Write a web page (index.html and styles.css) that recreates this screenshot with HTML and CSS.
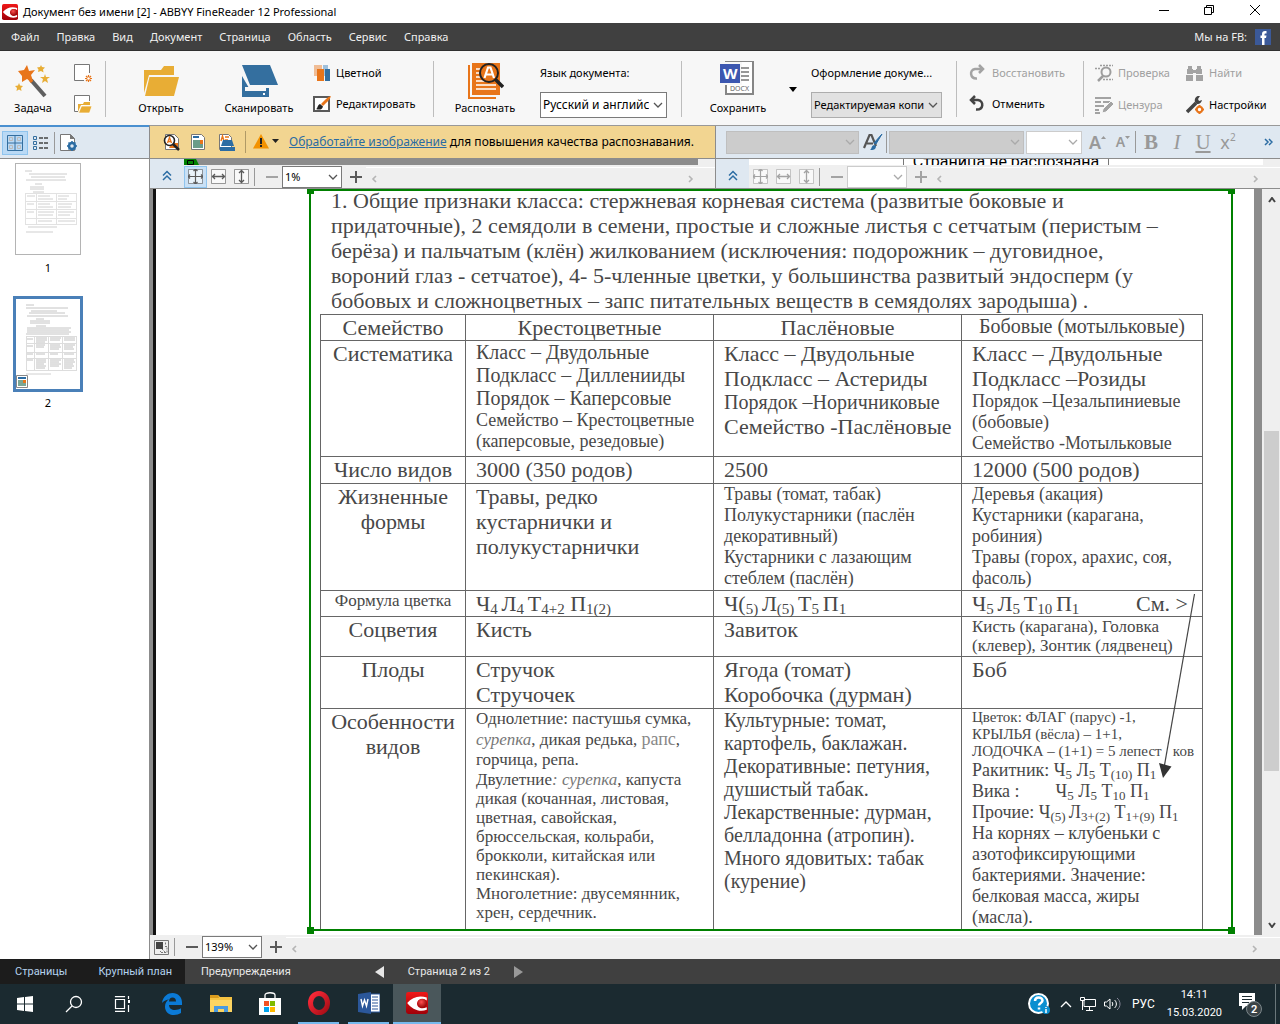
FILE: index.html
```
<!DOCTYPE html>
<html lang="ru">
<head>
<meta charset="utf-8">
<title>Документ без имени [2] - ABBYY FineReader 12 Professional</title>
<link rel="stylesheet" href="styles.css">
</head>
<body>
<svg class="defs" width="0" height="0" aria-hidden="true">
  <defs>
    <linearGradient id="red" x1="0" y1="0" x2="0" y2="1"><stop offset="0" stop-color="#f01818"/><stop offset="1" stop-color="#a00008"/></linearGradient>
    <linearGradient id="ring" x1="0" y1="0" x2="1" y2="1"><stop offset="0" stop-color="#ff2b3a"/><stop offset="1" stop-color="#a60d16"/></linearGradient>
    <radialGradient id="ball" cx=".4" cy=".35" r=".7"><stop offset="0" stop-color="#ff5050"/><stop offset="1" stop-color="#8c0000"/></radialGradient>
    <symbol id="abbyy" viewBox="0 0 18 18"><rect width="18" height="18" rx="2" fill="url(#red)"/><path d="M1 9C5 4 11 2.500 17 4.500v2.500C13 4.500 9 6 9 9.500c0 3.500 4 5 8 3v2C11 17 5 14 1 9z" fill="#fff"/><circle cx="13.300" cy="9.300" r="3.700" fill="url(#ball)"/></symbol>
    <symbol id="down" viewBox="0 0 10 6"><path d="M1 1l4 4 4-4" fill="none" stroke="currentColor" stroke-width="1.300"/></symbol>
    <symbol id="left" viewBox="0 0 6 8"><path d="M5 1L2 4l3 3" fill="none" stroke="currentColor" stroke-width="1.600"/></symbol>
    <symbol id="right" viewBox="0 0 6 8"><path d="M1 1l3 3-3 3" fill="none" stroke="currentColor" stroke-width="1.600"/></symbol>
    <symbol id="ups" viewBox="0 0 10 10"><path d="M1 5l4-4 4 4M1 9.500l4-4 4 4" fill="none" stroke="#2b6ca3" stroke-width="1.500"/></symbol>
    <symbol id="fitall" viewBox="0 0 15 15"><path d="M.5.5h14v14H.5z" fill="#fff" fill-opacity=".6" stroke="currentColor" stroke-opacity=".6"/><path d="M0 7.500h15M7.500 0v15M2 5.500l-2 2 2 2M13 5.500l2 2-2 2M5.500 2l2-2 2 2M5.500 13l2 2 2-2" fill="none" stroke="currentColor" stroke-width="1.200"/></symbol>
    <symbol id="fitw" viewBox="0 0 15 15"><path d="M.5.5h14v14H.5z" fill="#fff" fill-opacity=".6" stroke="currentColor" stroke-opacity=".6"/><path d="M1 7.500h13M4 5L1.500 7.500 4 10M11 5l2.500 2.500L11 10" fill="none" stroke="currentColor" stroke-width="1.300"/></symbol>
    <symbol id="fith" viewBox="0 0 15 15"><path d="M.5.5h14v14H.5z" fill="#fff" fill-opacity=".6" stroke="currentColor" stroke-opacity=".6"/><path d="M7.500 1v13M5 4l2.500-2.500L10 4M5 11l2.500 2.500L10 11" fill="none" stroke="currentColor" stroke-width="1.300"/></symbol>
    <symbol id="minus" viewBox="0 0 12 12"><path d="M0 5h12v2H0z" fill="currentColor"/></symbol>
    <symbol id="plus" viewBox="0 0 12 12"><path d="M0 5h5V0h2v5h5v2H7v5H5V7H0z" fill="currentColor"/></symbol>
  </defs>
</svg>

<header class="title">
  <svg width="16" height="16"><use href="#abbyy"/></svg>
  <h1>Документ без имени [2] - ABBYY FineReader 12 Professional</h1>
  <div class="winbtns">
    <button aria-label="Свернуть"><svg width="10" height="10"><path d="M0 5.500h10" stroke="#000"/></svg></button>
    <button aria-label="Восстановить окно"><svg width="10" height="10" fill="none" stroke="#000"><path d="M.5 2.500h7v7h-7zM2.500 2.500v-2h7v7h-2"/></svg></button>
    <button aria-label="Закрыть"><svg width="10" height="10"><path d="M0 0l10 10M10 0L0 10" stroke="#000"/></svg></button>
  </div>
</header>

<nav class="menu">
  <button>Файл</button><button>Правка</button><button>Вид</button><button>Документ</button><button>Страница</button><button>Область</button><button>Сервис</button><button>Справка</button>
  <a href="#fb" class="fb"><span>Мы на FB:</span>
    <svg width="16" height="16"><path d="M0 0h16v16H0z" fill="#3b5998"/><path d="M7 16V9H5.500V6.500H7V5c0-2 1-3 3-3h1.500v2.500h-1c-.7 0-1 .3-1 1v1h2L11 9H9.500v7z" fill="#fff"/></svg></a>
</nav>

<div class="tools">
  <section class="g g1">
    <button class="big"><svg width="38" height="38" viewBox="0 0 38 38"><path d="M17 19L31 35" stroke="#5f5f5f" stroke-width="4"/><path d="M13 15l5 6" stroke="#e8751a" stroke-width="3"/><path d="M13 4l2 6 6-1-4 5 2 6-6-2-5 3v-6L4 10l6-1z" fill="#e8751a"/><path d="M27 4l1 2 3 .5-2 2 .5 3-2.500-1.500L24 11l.5-2.500L23 6.500l3-.5zM31 13l1 3h4l-3 2 1 4-3-2-3 2 1-4-3-2h4zM5 22l1 2.500 3 .5-2 2 .5 3L5 28.500 2.500 30l.5-3-2-2 3-.5z" fill="#e8ad35"/></svg>Задача</button>
    <div class="rows">
      <button aria-label="Новый документ"><svg width="18" height="19" viewBox="0 0 18 19"><path d="M15.500 9V.5H.5v16H10" fill="#fff" stroke="#777"/><path d="M14.500 11v7M11 14.500h7M12 12l5 5M17 12l-5 5" stroke="#e8751a" stroke-width="1.200"/><circle cx="14.500" cy="14.500" r="1.300" fill="#fff"/></svg></button>
      <button aria-label="Открыть документ"><svg width="18" height="19" viewBox="0 0 18 19"><path d="M15.500 6V.5H.5v16H4" fill="#fff" stroke="#777"/><path d="M4 17V9h5l1-2h6v3H7z" fill="#e8ad35"/><path d="M7.500 11H18l-2.500 7H4.500z" fill="#e8ad35" stroke="#fff" stroke-width=".7"/></svg></button>
    </div>
  </section>
  <section class="g g2">
    <button class="big"><svg width="38" height="38" viewBox="0 0 38 38"><path d="M2 32V9h17l3-4h10v9H7z" fill="#e8ad35"/><path d="M7.500 16H37l-5 19H3z" fill="#e8ad35"/></svg>Открыть</button>
    <button class="big wide"><svg width="38" height="38" viewBox="0 0 38 38"><path d="M2 4h28l8 20H10z" fill="#346f9f"/><path d="M2 15l7 12h20v9H2z" fill="#346f9f"/><path d="M5 26h21v4H5z" fill="#f7f7f7"/><path d="M23 32h2v2h-2z" fill="#fff"/></svg>Сканировать</button>
    <div class="rows">
      <button class="lbl"><svg width="18" height="18"><path d="M1 1h8v11H1z" fill="#f0bd96"/><path d="M10 1h5v11h-5z" fill="#9fc0dc"/><path d="M4 5h7v12H4z" fill="#e8751a"/><path d="M12 5h5v12h-5z" fill="#346f9f"/></svg>Цветной</button>
      <button class="lbl"><svg width="18" height="18"><path d="M1 2h15v14H1z" fill="#fff" stroke="#5a5a5a" stroke-width="2"/><path d="M8 9c4-4 6-7 10-8-1 4-4 6-8 10z" fill="#e8751a"/><path d="M3 14c2-.5 1-4 4-5l3 2.500C9 15 6 15 3 14z" fill="#222"/></svg>Редактировать</button>
    </div>
  </section>
  <section class="g g3">
    <button class="big"><svg width="38" height="38" viewBox="0 0 38 38"><path d="M2 4h2v32h26v2H2z" fill="#e8751a"/><path d="M6 2h28v32H6z" fill="#e8751a"/><path d="M10 8h10M10 12h10M10 16h10M10 20h12M10 24h20M10 28h20" stroke="#fff" stroke-width="1.500"/><path d="M29 18l8 8" stroke="#222" stroke-width="3.500"/><circle cx="23" cy="12" r="9" fill="#e8751a" stroke="#222" stroke-width="2"/><path d="M18.500 17L22 6.500h2.500L28 17M20 13.500h6.500" fill="none" stroke="#fff" stroke-width="2.200"/></svg>Распознать</button>
    <div class="rows">
      <label for="lang">Язык документа:</label>
      <span class="pick w127"><select id="lang"><option>Русский и английский</option></select><svg width="10" height="6"><use href="#down"/></svg></span>
    </div>
  </section>
  <section class="g g4">
    <button class="big"><svg width="38" height="38" viewBox="0 0 38 38"><path d="M7 0h27v33H7z" fill="#fff" stroke="#868686" stroke-width="2"/><path d="M0 2h22v21H0z" fill="#3c57b0" stroke="#f7f7f7" stroke-width="2"/><path d="M22 7h8M22 11h8M22 15h8M22 19h8" stroke="#777" stroke-width="1.500"/><text x="4" y="18" font-size="15" font-weight="700" fill="#fff">W</text><text x="11" y="30" font-size="7" fill="#666">DOCX</text></svg>Сохранить</button>
    <button class="arrow" aria-label="Варианты сохранения"><svg width="8" height="5"><path d="M0 0h8L4 5z"/></svg></button>
    <div class="rows">
      <label for="style">Оформление докуме...</label>
      <span class="pick w131 grey"><select id="style"><option>Редактируемая копия</option></select><svg width="10" height="6"><use href="#down"/></svg></span>
    </div>
  </section>
  <section class="g g5">
    <div class="rows">
      <button class="lbl" disabled><svg width="18" height="18" fill="none" stroke="#a3a3a3" stroke-width="2.500"><path d="M10 1l4 4-4 4M14 5H6c-6 1-5 10 2 9.500"/></svg>Восстановить</button>
      <button class="lbl"><svg width="18" height="18" fill="none" stroke="#444" stroke-width="2.500"><path d="M6 1L2 5l4 4M2 5h7c6 1 6 10-2 9.500"/></svg>Отменить</button>
    </div>
  </section>
  <section class="g g6">
    <button class="lbl" disabled><svg width="18" height="18" fill="none" stroke="#9d9d9d"><circle cx="11" cy="8" r="4.500" stroke-width="2"/><path d="M8 12l-5 5" stroke-width="2.500"/><path d="M5 1.500h13M0 4.500h6M8 15.500h10" stroke-dasharray="2 1" stroke-width="1.500"/></svg>Проверка</button>
    <button class="lbl" disabled><svg width="18" height="18" fill="#a3a3a3"><path d="M2 2h4v3H2zM11 2h4v3h-4zM1 5h6v5H1zM10 5h6v5h-6zM7 6h3v3H7zM0 11h7v6H0zM10 11h7v6h-7z"/></svg>Найти</button>
    <button class="lbl" disabled><svg width="18" height="18"><path d="M0 2h16M0 6h6M8 6h8M0 10h9M0 14h4M0 17h5" stroke="#a3a3a3" stroke-width="2"/><path d="M7 17l1-4 8-8 3 3-8 8z" fill="#a3a3a3" stroke="#f7f7f7"/></svg>Цензура</button>
    <button class="lbl"><svg width="18" height="18"><path d="M1 16L10 7" stroke="#444" stroke-width="3.500"/><path d="M14 0c-4-1-6 3-5 6 1 3 6 3 7-2l-3 1-1-2z" fill="#444"/><circle cx="13.500" cy="13.500" r="2.700" fill="#fff" stroke="#e8751a" stroke-width="2"/><path d="M13.500 9v2M13.500 16v2M9 13.500h2M16 13.500h2" stroke="#e8751a" stroke-width="2"/></svg>Настройки</button>
  </section>
</div>

<main>
  <aside>
    <div class="viewbar">
      <button class="sel" aria-label="Эскизы"><svg width="16" height="16" fill="none" stroke="#346f9f"><path d="M.5.500h15v15H.5zM8 0v16M0 8h16"/><path d="M2.500 2.500h3v3h-3zM10.500 2.500h3v3h-3zM2.500 10.500h3v3h-3zM10.500 10.500h3v3h-3z" stroke="#bbb"/></svg></button>
      <button aria-label="Список"><svg width="16" height="14" fill="none"><path d="M.5.5h3v3h-3zM.5 5.500h3v3h-3zM.5 10.500h3v3h-3z" stroke="#346f9f"/><path d="M6 2h10M6 7h10M6 12h10" stroke="#444" stroke-width="1.500" stroke-dasharray="4 1"/></svg></button>
      <i class="sep"></i>
      <button aria-label="Свойства страницы"><svg width="18" height="18" viewBox="0 0 18 18"><path d="M.5.5h10l4 4v12H.5z" fill="#fff" stroke="#777"/><path d="M10 0v5h5z" fill="#777"/><circle cx="12" cy="12" r="3" fill="#dfe8f1" stroke="#2b6ca3" stroke-width="2.500"/><path d="M12 7v2M12 15v2M7 12h2M15 12h2M8.500 8.500L10 10M14 14l1.500 1.500M15.500 8.500L14 10M10 14l-1.500 1.500" stroke="#2b6ca3" stroke-width="1.500"/></svg></button>
    </div>
    <ol class="thumbs">
      <li><a href="#p1" class="thumb" aria-label="Страница 1"><svg width="64" height="90" stroke="#cfcfcf"><path d="M9 7h7M13 10h38M15 13h34M10 16h40M19 20h7M14 23h14M14 25h14M17 28h11" stroke="#ccc"/><g stroke="#d0d0d0"><path d="M9 29.500h52M9 37.500h52M9 45.500h52M9 54.500h52M9 60.500h52M9.500 29v32M20.500 29v32M40.500 29v32M60.500 29v32" stroke="#e2e2e2"/><path d="M22 32h12M22 35h15M22 40h12M22 43h15M22 48h16M22 51h15M22 57h14M42 32h11M42 35h9M42 40h14M42 43h13M42 48h16M42 51h12M42 57h17M11 32h8M11 40h7M11 48h7"/></g><path d="M12 63h29M10 68h27"/></svg></a><span>1</span></li>
      <li><a href="#p2" class="thumb on" aria-label="Страница 2"><svg width="64" height="90" stroke="#d0d0d0"><path d="M10 6h8M10 9h42M15 12h26M13 14h36M11 17h41M20 20h8M14 22h20M14 24h20M20 27h10M11 29h44M11 31h42M11 33h44M10 35h43" stroke="#c4c4c4"/><path d="M10 37.500h51M10 44.500h51M10 53.500h51M10 59.500h51M10 71.500h51M10.500 37v35M18.500 37v35M32.500 37v35M46.500 37v35M60.500 37v35" stroke="#ddd"/><path d="M20 39h11M20 41h11M20 43h9M34 39h11M34 41h10M48 39h11M48 41h11M20 46h9M20 48h8M34 46h10M34 48h11M34 50h9M48 46h11M48 48h9M48 50h10M20 55h9M34 55h8M48 55h10M20 61h10M20 63h10M20 65h8M20 67h10M20 69h9M34 61h11M34 63h9M34 65h11M34 67h9M48 61h10M48 63h11M48 65h9M48 67h10M48 69h8M11 40h6M11 47h6M11 55h6M11 61h6" stroke="#c0c0c0"/><path d="M10 75h25"/><path d="M.5 76.500h11v12H.5z" fill="#fff" stroke="#888"/><path d="M2 79h8" stroke="#2b6ca3" stroke-width="2"/><path d="M2 81h8v6H2z" fill="#7aa695" stroke="none"/><path d="M7 81h3v3H7z" fill="#e8751a" stroke="none"/></svg></a><span>2</span></li>
    </ol>
  </aside>

  <div class="work">
    <div class="bars">
      <div class="msg">
        <button aria-label="Распознать страницу"><svg width="18" height="18"><path d="M2.500 1.500h9l4 4v11h-13z" fill="#fff" stroke="#777"/><path d="M9 10h6v5H6z" fill="#e8751a"/><circle cx="6.500" cy="7.500" r="5" fill="#fff" stroke="#222" stroke-width="1.600"/><path d="M10 11l6 6" stroke="#222" stroke-width="2.500"/><path d="M4.500 10l2-5.500 2 5.500M5 8.500h3" fill="none" stroke="#e8751a" stroke-width="1.300"/></svg></button>
        <button aria-label="Анализ страницы"><svg width="18" height="18"><path d="M1.500 1.500h10l3 3v12h-13z" fill="#fff" stroke="#777"/><path d="M3 3h6v2H3z" fill="#2b6ca3"/><path d="M3 7h10v8H3z" fill="#6b9c89"/><path d="M10 7h3v4h-3z" fill="#e8751a"/></svg></button>
        <button aria-label="Сканировать страницу"><svg width="18" height="18"><path d="M2.500 1.500h9l3 3v12h-12z" fill="#fff" stroke="#777"/><path d="M4 8l1.500-5L7 8M8 4h4M8 7h3" fill="none" stroke="#e8751a" stroke-width="1.400"/><path d="M6 7h9l2 6H4zM3 14h15v4H3z" fill="#2b6ca3"/></svg></button>
        <i class="sep"></i>
        <button class="warn" aria-label="Предупреждения страницы"><svg width="27" height="16"><path d="M8 0l8 14.500H0z" fill="#f39200"/><path d="M8 4v6M8 11v2" stroke="#222" stroke-width="2"/><path d="M19 5h7l-3.500 4z" fill="#222"/></svg></button>
        <p><a href="#fix">Обработайте изображение</a> для повышения качества распознавания.</p>
      </div>
      <div class="fmt">
        <span class="pick w133 off"><select aria-label="Стиль" disabled><option></option></select><svg width="10" height="6"><use href="#down"/></svg></span>
        <button class="brush" aria-label="Редактор стилей"><svg width="20" height="18"><path d="M1 15L6.500 2h2L13 13M4 10.500h6" fill="none" stroke="#555" stroke-width="2.200"/><path d="M19 1l-6 10-2-1z" fill="#2b6ca3" stroke="#2b6ca3"/><path d="M7 17c2-1 1-4 4-5l2 1c0 4-3 4-6 4z" fill="#2b6ca3"/></svg></button>
        <i class="sep"></i>
        <span class="pick w135 off"><select aria-label="Шрифт" disabled><option></option></select><svg width="10" height="6"><use href="#down"/></svg></span>
        <span class="pick w56 pale"><select aria-label="Размер шрифта" disabled><option></option></select><svg width="10" height="6"><use href="#down"/></svg></span>
        <button class="f big-a" disabled>A<svg width="5" height="3"><path d="M0 3l2.500-3L5 3z" fill="#999"/></svg></button>
        <button class="f small-a" disabled>A<svg width="5" height="3"><path d="M0 0l2.500 3L5 0z" fill="#999"/></svg></button>
        <i class="sep"></i>
        <button class="f serif b" disabled>B</button>
        <button class="f serif i" disabled>I</button>
        <button class="f serif u" disabled>U</button>
        <button class="f x2" disabled>x<sup>2</sup></button>
        <button class="more" aria-label="Ещё"><svg width="9" height="8" fill="none" stroke="#2b6ca3" stroke-width="1.500"><path d="M1 1l3 3-3 3M5 1l3 3-3 3"/></svg></button>
      </div>
    </div>

    <div class="minis">
      <div class="mini">
        <button class="fold" aria-label="Свернуть панель"><svg width="10" height="11"><use href="#ups"/></svg></button>
        <div class="minibody">
          <div class="peek dark"><svg width="16" height="6"><path d="M0 0h12l3 6H0z" fill="#008000"/><path d="M3.500 1.500h6v4h-6z" fill="#008000" stroke="#000"/></svg></div>
          <div class="zoombar">
            <button class="sq on" aria-label="По размеру окна"><svg width="15" height="15"><use href="#fitall"/></svg></button>
            <button class="sq" aria-label="По ширине"><svg width="15" height="15"><use href="#fitw"/></svg></button>
            <button class="sq" aria-label="По высоте"><svg width="15" height="15"><use href="#fith"/></svg></button>
            <i class="sep"></i>
            <button class="z dim" aria-label="Уменьшить"><svg width="12" height="12"><use href="#minus"/></svg></button>
            <span class="pick zoom"><select aria-label="Масштаб"><option>1%</option></select><svg width="10" height="6"><use href="#down"/></svg></span>
            <button class="z" aria-label="Увеличить"><svg width="12" height="12"><use href="#plus"/></svg></button>
            <div class="hscroll"><svg width="6" height="8"><use href="#left"/></svg><svg width="6" height="8"><use href="#right"/></svg></div>
          </div>
        </div>
      </div>
      <div class="mini second">
        <button class="fold" aria-label="Свернуть панель"><svg width="10" height="11"><use href="#ups"/></svg></button>
        <div class="minibody">
          <div class="peek light"><p>Страница не распознана</p></div>
          <div class="zoombar disabled">
            <button class="sq" disabled aria-label="По размеру окна"><svg width="15" height="15"><use href="#fitall"/></svg></button>
            <button class="sq" disabled aria-label="По ширине"><svg width="15" height="15"><use href="#fitw"/></svg></button>
            <button class="sq" disabled aria-label="По высоте"><svg width="15" height="15"><use href="#fith"/></svg></button>
            <i class="sep"></i>
            <button class="z" disabled aria-label="Уменьшить"><svg width="12" height="12"><use href="#minus"/></svg></button>
            <span class="pick zoom pale"><select aria-label="Масштаб" disabled><option></option></select><svg width="10" height="6"><use href="#down"/></svg></span>
            <button class="z" disabled aria-label="Увеличить"><svg width="12" height="12"><use href="#plus"/></svg></button>
            <div class="hscroll"><svg width="6" height="8"><use href="#left"/></svg><svg width="6" height="8"><use href="#right"/></svg></div>
          </div>
        </div>
      </div>
    </div>

    <div class="view">
      <div class="canvas">
        <div class="paper">
          <article class="region">
            <i class="h tl"></i><i class="h tr"></i><i class="h bl"></i><i class="h br"></i>
            <p class="intro">1. Общие признаки класса: стержневая корневая система (развитые боковые и<br>придаточные), 2 семядоли в семени, простые и сложные листья с сетчатым (перистым –<br>берёза) и пальчатым (клён) жилкованием (исключения: подорожник – дуговидное,<br>вороний глаз - сетчатое), 4- 5-членные цветки, у большинства развитый эндосперм (у<br>бобовых и сложноцветных – запс питательных веществ в семядолях зародыша) .</p>
            <table>
              <colgroup><col class="c1"><col class="c2"><col class="c2"><col class="c3"></colgroup>
              <tr class="r1"><th>Семейство</th><th>Крестоцветные</th><th>Паслёновые</th><th class="t20">Бобовые (мотыльковые)</th></tr>
              <tr class="r2"><th>Систематика</th>
                <td><p class="t20">Класс – Двудольные<br>Подкласс – Дилленииды<br>Порядок – Каперсовые</p><p class="t18">Семейство – Крестоцветные<br>(каперсовые, резедовые)</p></td>
                <td><p>Класс – Двудольные<br>Подкласс – Астериды</p><p class="t20">Порядок –Норичниковые</p><p>Семейство -Паслёновые</p></td>
                <td><p>Класс – Двудольные<br>Подкласс –Розиды</p><p class="t18">Порядок –Цезальпиниевые<br>(бобовые)<br>Семейство -Мотыльковые</p></td></tr>
              <tr class="r3"><th>Число видов</th><td>3000 (350 родов)</td><td>2500</td><td>12000 (500 родов)</td></tr>
              <tr class="r4"><th>Жизненные<br>формы</th>
                <td>Травы, редко<br>кустарнички и<br>полукустарнички</td>
                <td class="t18">Травы (томат, табак)<br>Полукустарники (паслён<br>декоративный)<br>Кустарники с лазающим<br>стеблем (паслён)</td>
                <td class="t18">Деревья (акация)<br>Кустарники (карагана,<br>робиния)<br>Травы (горох, арахис, соя,<br>фасоль)</td></tr>
              <tr class="r5"><th class="t17">Формула цветка</th>
                <td>Ч<sub>4 </sub>Л<sub>4 </sub>Т<sub>4+2</sub> П<sub>1(2)</sub></td>
                <td>Ч(<sub>5) </sub>Л<sub>(5) </sub>Т<sub>5 </sub>П<sub>1</sub></td>
                <td><span class="see">См. &gt;</span>Ч<sub>5 </sub>Л<sub>5 </sub>Т<sub>10 </sub>П<sub>1</sub></td></tr>
              <tr class="r6"><th>Соцветия</th><td>Кисть</td><td>Завиток</td><td class="t17">Кисть (карагана), Головка<br>(клевер), Зонтик (лядвенец)</td></tr>
              <tr class="r7"><th>Плоды</th><td>Стручок<br>Стручочек</td><td>Ягода (томат)<br>Коробочка (дурман)</td><td>Боб</td></tr>
              <tr class="r8"><th>Особенности<br>видов</th>
                <td><p class="t17 loose">Однолетние: пастушья сумка,<br><em>сурепка</em>, дикая редька, <span class="t18 faint">рапс</span>,<br>горчица, репа.</p><p class="t17">Двулетние<em>: сурепка</em>, капуста<br>дикая (кочанная, листовая,<br>цветная, савойская,<br>брюссельская, кольраби,<br>брокколи, китайская или<br>пекинская).<br>Многолетние: двусемянник,<br>хрен, сердечник.</p></td>
                <td class="t20">Культурные: томат,<br>картофель, баклажан.<br>Декоративные: петуния,<br>душистый табак.<br>Лекарственные: дурман,<br>белладонна (атропин).<br>Много ядовитых: табак<br>(курение)</td>
                <td><p class="t15">Цветок: ФЛАГ (парус) -1,<br>КРЫЛЬЯ (вёсла) – 1+1,<br>ЛОДОЧКА – (1+1) = 5 лепест&nbsp;&nbsp; ков</p><p class="t18">Ракитник: Ч<sub>5</sub> Л<sub>5</sub> Т<sub>(10)</sub> П<sub>1</sub><br>Вика :&emsp;&emsp;Ч<sub>5</sub> Л<sub>5</sub> Т<sub>10</sub> П<sub>1</sub><br>Прочие: Ч<sub>(5) </sub>Л<sub>3+(2)</sub> Т<sub>1+(9)</sub> П<sub>1</sub><br>На корнях – клубеньки с<br>азотофиксирующими<br>бактериями. Значение:<br>белковая масса, жиры<br>(масла).</p></td></tr>
            </table>
            <svg class="pointer" width="900" height="600"><path d="M883.500 403L853 577" stroke="#444" stroke-width="1.200"/><path d="M848 572l12.500 3.500L852 587z" fill="#333"/></svg>
          </article>
        </div>
      </div>
      <div class="vscroll"><svg width="8" height="6"><path d="M1 5l3-4 3 4" fill="none" stroke="#444" stroke-width="2"/></svg><i class="knob"></i><svg width="8" height="6"><path d="M1 1l3 4 3-4" fill="none" stroke="#444" stroke-width="2"/></svg></div>
    </div>
    <div class="zoombar bottom">
      <button class="sq" aria-label="Режим просмотра"><svg width="15" height="15" fill="none" stroke="#777"><path d="M.5.5h14v14H.5z"/><path d="M2 2h7v7H2z" fill="#444" stroke="none"/><path d="M11.500 4.500v-2M11 6.500h2v6H6.500V11M8 9l4 4" stroke-dasharray="2 1"/></svg></button>
      <i class="sep"></i>
      <button class="z" aria-label="Уменьшить"><svg width="12" height="12"><use href="#minus"/></svg></button>
      <span class="pick zoom"><select aria-label="Масштаб страницы"><option>139%</option></select><svg width="10" height="6"><use href="#down"/></svg></span>
      <button class="z" aria-label="Увеличить"><svg width="12" height="12"><use href="#plus"/></svg></button>
      <div class="hscroll"><svg width="6" height="8"><use href="#left"/></svg><svg width="6" height="8"><use href="#right"/></svg></div>
    </div>
  </div>
</main>

<div class="status">
  <div class="tabs"><button>Страницы</button><button>Крупный план</button></div>
  <button class="plain">Предупреждения</button>
  <div class="pager">
    <button aria-label="Предыдущая страница"><svg width="9" height="12"><path d="M9 0v12L0 6z" fill="#e6e6e6"/></svg></button>
    <span>Страница 2 из 2</span>
    <button aria-label="Следующая страница"><svg width="9" height="12"><path d="M0 0v12l9-6z" fill="#999"/></svg></button>
  </div>
</div>

<footer class="taskbar">
  <button aria-label="Пуск"><svg width="16" height="16" fill="#fff"><path d="M0 2l7-1v6.500H0zM8 1l8-1v7.500H8zM0 8.500h7V15l-7-1zM8 8.500h8V16l-8-1z"/></svg></button>
  <button aria-label="Поиск"><svg width="18" height="18" fill="none" stroke="#fff" stroke-width="1.300"><circle cx="11" cy="7" r="5.500"/><path d="M7 11l-6 6"/></svg></button>
  <button aria-label="Представление задач"><svg width="18" height="16" fill="none" stroke="#fff" stroke-width="1.200"><path d="M1.500 3.500h9v9h-9zM1.500 1V0M10.500 1V0M1 .7h10M1 15.300h10M14.500 0v3M14.500 9v7"/><path d="M14 4h2v3h-2z" fill="#fff" stroke="none"/></svg></button>
  <button aria-label="Edge"><svg width="20" height="22" viewBox="0 0 20 22"><path d="M0 10C1 3 6 0 10.500 0 16 0 20 4 20 9.500V12H7c0 3 2.500 5 6 5 2.300 0 4.300-.7 6-1.700V20c-2 1.200-4.300 2-7 2-5.500 0-9-3.500-9-8.300 0-3.200 1.700-6 4-7.400C3.500 7 1.500 8.500 0 10zM7 8.500h7c0-2.500-1.300-4-3.500-4S7.200 6 7 8.500z" fill="#0b7ad6"/></svg></button>
  <button aria-label="Проводник"><svg width="22" height="20"><path d="M0 1h8l2 2h12v15H0z" fill="#f5c242"/><path d="M0 1h8l1 3H0z" fill="#d99a1c"/><path d="M0 6h22v12H0z" fill="#fcd462"/><path d="M4 18v-6h14v6h-4v-3H8v3z" fill="#4a9ae0"/></svg></button>
  <button aria-label="Магазин"><svg width="22" height="24"><path d="M6 6V3c0-3 10-3 10 0v3" fill="none" stroke="#fff" stroke-width="1.300"/><path d="M0 6h22v17H0z" fill="#fff"/><path d="M5 9h5v5H5z" fill="#f25022"/><path d="M11 9h5v5h-5z" fill="#7fba00"/><path d="M5 15h5v5H5z" fill="#00a4ef"/><path d="M11 15h5v5h-5z" fill="#ffb900"/></svg></button>
  <button class="run" aria-label="Opera"><svg width="24" height="24"><ellipse cx="12" cy="12" rx="8.500" ry="9.500" fill="none" stroke="url(#ring)" stroke-width="5"/></svg></button>
  <button class="run" aria-label="Word"><svg width="22" height="22"><path d="M12 2h10v18H12z" fill="#fff" stroke="#2b579a"/><path d="M14 5h6M14 8h6M14 11h6M14 14h6M14 17h6" stroke="#2b579a"/><path d="M0 2l13-2v22L0 20z" fill="#2b579a"/><path d="M3 7l1.500 7L6.500 8l2 6L10 7" fill="none" stroke="#fff" stroke-width="1.400"/></svg></button>
  <button class="run active" aria-label="FineReader"><svg width="22" height="22"><use href="#abbyy"/></svg></button>
  <div class="tray">
    <svg width="22" height="22"><circle cx="10.500" cy="10.500" r="9.500" fill="#0a8fd0" stroke="#fff" stroke-width="2"/><path d="M7 8c0-5 7.500-4.500 7.500-.5 0 2.500-3.500 2.500-3.500 5M11 14.500v2" fill="none" stroke="#fff" stroke-width="2.500"/><circle cx="18" cy="17" r="4" fill="#0a8fd0"/><path d="M18 14v1M18 16v4" stroke="#fff" stroke-width="1.500"/></svg>
    <svg width="12" height="8"><path d="M1 7l5-5 5 5" fill="none" stroke="#fff" stroke-width="1.300"/></svg>
    <svg width="16" height="14" fill="none" stroke="#fff"><path d="M4 2.500h11.500v7H4zM9.500 10v3M6 13.500h7M.5.500h4v3h-4zM2.500 4v9"/></svg>
    <svg width="17" height="14" fill="none" stroke="#fff"><path d="M.5 5v4h2L6 12V2L2.500 5zM8 5c1 1 1 3 0 4M10.500 3c2.500 2 2.500 6 0 8"/><path d="M13 1c4 3 4 9 0 12" stroke="#889"/></svg>
    <span class="kb">РУС</span>
    <div class="clock"><span>14:11</span><span>15.03.2020</span></div>
    <svg width="25" height="25"><path d="M1 1h16v13H8l-4 4v-4H1z" fill="#fff"/><path d="M4 4.500h10M4 7.500h10M4 10.500h7" stroke="#1b2a30"/><circle cx="16" cy="17" r="7.500" fill="#3a4347" stroke="#7b868a"/><text x="13" y="21" font-size="11" font-weight="600" fill="#fff">2</text></svg>
    <i class="edge"></i>
  </div>
</footer>
</body>
</html>
```
FILE: styles.css
```
*{box-sizing:border-box}
body{margin:0;min-height:100vh;display:flex;flex-direction:column;background:#fff;color:#000;font:11px/16px "Noto Sans",sans-serif}
button{margin:0;padding:0;border:0;background:none;font:inherit;color:inherit;display:flex;align-items:center;justify-content:center;white-space:nowrap;flex:none}
svg{display:block;flex:none}
p,h1{margin:0}
.defs{position:absolute}

.title{display:flex;align-items:center;height:23px;padding-left:2px;gap:5px}
.title h1{font-size:11px;font-weight:400}
.winbtns{margin-left:auto;display:flex;align-self:flex-start}
.winbtns button{width:48px;height:20px}
.winbtns button:nth-child(2){width:42px}
.winbtns button:last-child{width:50px}

.menu{display:flex;align-items:center;height:28px;padding:0 9px 0 11px;gap:17px;background:#404040;color:#f0f0f0;border-bottom:1px solid #303030}
.fb{margin-left:auto;display:flex;align-items:center;gap:8px;color:inherit;text-decoration:none}

.tools{display:grid;grid-template-columns:106px 328px 248px 275px 127px 1fr;height:74px;padding:10px 0 8px;background:#f7f7f7}
.g{display:flex;align-items:flex-start;height:56px;border-right:1px solid #bdbdbd}
.big{flex-direction:column;width:70px;line-height:18px}
.big.wide{width:80px}
.rows{display:flex;flex-direction:column;gap:7px}
.rows>*{height:24px;line-height:24px}
.lbl{justify-content:flex-start;gap:5px;height:24px}
.lbl:disabled{color:#a0a0a0}
.g1 .big{width:66px}
.g1 .rows{margin-left:8px}
.g2{padding-left:20px}
.g2 .wide{margin:0 14px 0 23px}
.g3{padding-left:16px}
.g3 .rows{margin-left:20px}
.g4{padding-left:21px}
.arrow{width:8px;height:56px;padding-top:1px;margin:0 14px 0 16px}
.g5{padding-left:12px}
.g6{display:grid;grid-template-columns:91px 1fr;row-gap:7px;padding-left:11px;border:0}

.pick{display:grid;align-items:center;color:#555;flex:none}
.pick>*{grid-area:1/1}
.pick svg{justify-self:end;margin-right:4px;pointer-events:none}
.pick select{appearance:none;width:100%;height:100%;margin:0;padding:0 17px 0 3px;border:1px solid #7a7a7a;border-radius:0;background:#fff;color:#000;font:inherit;opacity:1}
.w127{width:127px}
.pick.w127 select{font-size:12px;padding-left:2px}
.w131{width:131px}
.w133{width:133px}
.w135{width:135px}
.w56{width:56px}
.grey select{background:#e1e1e1;border-color:#adadad;padding-left:2px}
.off,.pale{color:#aaa}
.off select{background:#ccc;border-color:#bfbfbf}
.pale select{border-color:#ccc}

main{flex:1;display:grid;grid-template-columns:150px minmax(0,1fr)}
aside{border-right:1px solid #8c8c8c}
.viewbar{display:flex;align-items:center;height:34px;padding:3px 0 2px 2px;background:#dfe8f1;border-top:2px solid #4a90d0;border-bottom:1px solid #8c8c8c}
.viewbar button{height:24px;width:26px}
.viewbar .sel{background:#b9d9f5;border:1px solid #8fc4ee}
.viewbar .sep{margin:0}
.viewbar .sep+button{width:28px}
.sep{width:1px;height:22px;background:#999;flex:none}
.thumbs{list-style:none;margin:0;padding:4px 0 0}
.thumbs li{width:96px;display:flex;flex-direction:column;align-items:center;margin-bottom:18px}
.thumb{border:1px solid #b4b4b4;display:block;height:92px}
.thumb.on{border:3px solid #4a80b8;height:96px;width:70px}
.thumbs span{line-height:20px;margin-top:3px}
.thumbs .on+span{margin-top:1px}

.work{display:flex;flex-direction:column;min-width:0}
.bars,.minis{display:grid;grid-template-columns:1fr 1fr}
.bars{height:34px;border-top:1px solid #999;border-bottom:1px solid #8c8c8c}
.msg{display:flex;align-items:center;padding-left:13px;background:#f2d591;font-size:12px}
.msg button{width:27px}
.msg button:first-child{width:18px;margin-right:4px}
.msg .sep{margin:0 7px 0 6px;background:#b09a66}
.msg p{margin-left:9px;white-space:nowrap}
.msg a{color:#2b6ca3}
.fmt,.mini.second{border-left:1px solid #8c8c8c}
.fmt{display:flex;align-items:center;padding:0 7px 0 10px;background:#dfe8f1}
.fmt .pick{height:23px}
.brush{margin:0 3px 0 4px}
.fmt .sep{margin-right:2px}
.fmt .w56{margin-left:2px}
.f{color:#999;font-size:18px;font-weight:600;line-height:20px;width:27px}
.f:disabled{color:#999}
.big-a{align-items:flex-start;margin-left:2px}
.small-a{font-size:14px;align-items:flex-start;width:24px}
.big-a svg,.small-a svg{margin-top:4px}
.serif{font-family:"Liberation Serif",serif;font-size:21px;width:26px;font-weight:400}
.serif.b{font-weight:700}
.serif.i{font-style:italic}
.serif.u{text-decoration:underline}
.x2{font-weight:400;width:24px}
.f sup{font-size:10px;line-height:10px;align-self:flex-start}
.more{margin-left:auto}

.minis{height:30px;border-bottom:1px solid #8c8c8c;background:#efefef}
.mini{display:grid;grid-template-columns:34px minmax(0,1fr)}
.mini.second{grid-template-columns:33px minmax(0,1fr)}
.fold{background:#dfe8f1;padding-top:3px}
.minibody{display:grid;grid-template-rows:6px 1fr}
.peek{overflow:hidden;margin-right:17px}
.dark{background:#8c8c8c}
.light{background:#fff;display:flex;justify-content:center}
.light p{font:16px/20px Roboto,sans-serif;padding:0 9px;border:1px solid #777;border-top:0;margin-top:-7px;height:22px;white-space:nowrap}
.zoombar{display:flex;align-items:center;background:#efefef;color:#5a5a5a;min-width:0}
.sq{width:23px;height:22px}
.sq.on{background:#c9e0f5;border:1px solid #8fc4ee}
.zoombar .sep{height:18px;margin:0 6px 0 1px}
.z{width:21px;height:20px}
.zoombar .pick+.z{margin-left:3px}
.z.dim,.z:disabled,.sq:disabled{color:#a3a3a3}
.pick.zoom{width:60px;height:22px}
.zoom select{padding-left:2px}
.hscroll{flex:1;display:flex;justify-content:space-between;padding:7px 21px 0 5px;height:20px;color:#b5b5b5;border-top:1px solid #fff}

.view{flex:1;display:grid;grid-template-columns:minmax(0,1fr) 17px}
.canvas{background:#8c8c8c;padding:0 8px 0 3px;border-right:1px solid #efefef;overflow:hidden}
.paper{background:#fff;border-left:3px solid #111;padding:0 21px 4px 153px;height:100%}
.region{position:relative;border:2px solid #008000;padding:0 28px 0 9px;color:#484848;font:22px/25px "Liberation Serif",serif}
.h{position:absolute;width:7px;height:7px;background:#008000}
.tl,.bl{left:-4px}
.tr,.br{right:-4px}
.tl,.tr{top:-4px}
.bl,.br{bottom:-5px}
.intro{margin:-3px 0 1px 11px;white-space:nowrap}
.region table{width:100%;border-collapse:collapse;table-layout:fixed}
.c1{width:145px}
.c2{width:248px}
.region th,.region td{border:1px solid #666;padding:0 0 0 10px;vertical-align:top;text-align:left;font-weight:400;white-space:nowrap}
.region th{text-align:center;padding:0}
.region .r8>*{border-bottom:0}
.r2{height:116px}
.r3{height:27px}
.r4{height:107px}
.r6{height:40px}
.r7{height:52px}
.r8{height:220px}
.t20{font-size:20px;line-height:23px}
.t18{font-size:18px;line-height:21px}
.t17{font-size:17px;line-height:19px}
.t15{font-size:15px;line-height:17px}
.loose,.loose span{line-height:20px}
.faint{color:#888}
.region em{color:#777}
sub{font-size:15px;line-height:0;vertical-align:-3px}
.t18 sub{font-size:13px}
.see{float:right;margin-right:14px}
.pointer{position:absolute;left:0;top:0;pointer-events:none}
.vscroll{display:grid;grid-template-rows:21px 221fr 340fr 143fr 21px;justify-items:center;align-items:center;background:#efefef}
.knob{grid-row:3;width:15px;height:100%;background:#cdcdcd}
.vscroll svg:last-child{grid-row:5}
.bottom{height:24px}
.bottom .hscroll{padding-right:22px}

.status{display:flex;align-items:center;height:25px;background:#404040;color:#e8e8e8;font:11px/25px Roboto,sans-serif}
.tabs{display:flex;gap:31px;height:25px;padding:0 13px 0 15px;background:#1c1c1c;color:#b4d2ee}
.plain{margin:0 84px 0 16px}
.pager{display:flex;align-items:center;gap:24px}

.taskbar{display:flex;align-items:stretch;height:40px;background:#1b2a30;color:#fff;font:12px/16px Roboto,sans-serif}
.taskbar>button{width:49px;height:40px}
.taskbar>.run{border-bottom:2px solid #76b9ed;width:41px;margin:0 5px 0 4px}
.taskbar>.run.active{width:48px;margin:0 0 0 -1px;background:#4a575b}
.tray{margin-left:auto;display:flex;align-items:center}
.tray>svg{margin-right:8px}
.tray>svg:first-child{margin-right:10px}
.kb{margin:0 12px 0 3px}
.clock{display:flex;flex-direction:column;text-align:center;font-size:11px;line-height:18px;margin-right:16px}
.tray>.clock+svg{margin-right:12px}
.edge{width:1px;height:40px;margin-right:4px;background:#6b777b}
```
